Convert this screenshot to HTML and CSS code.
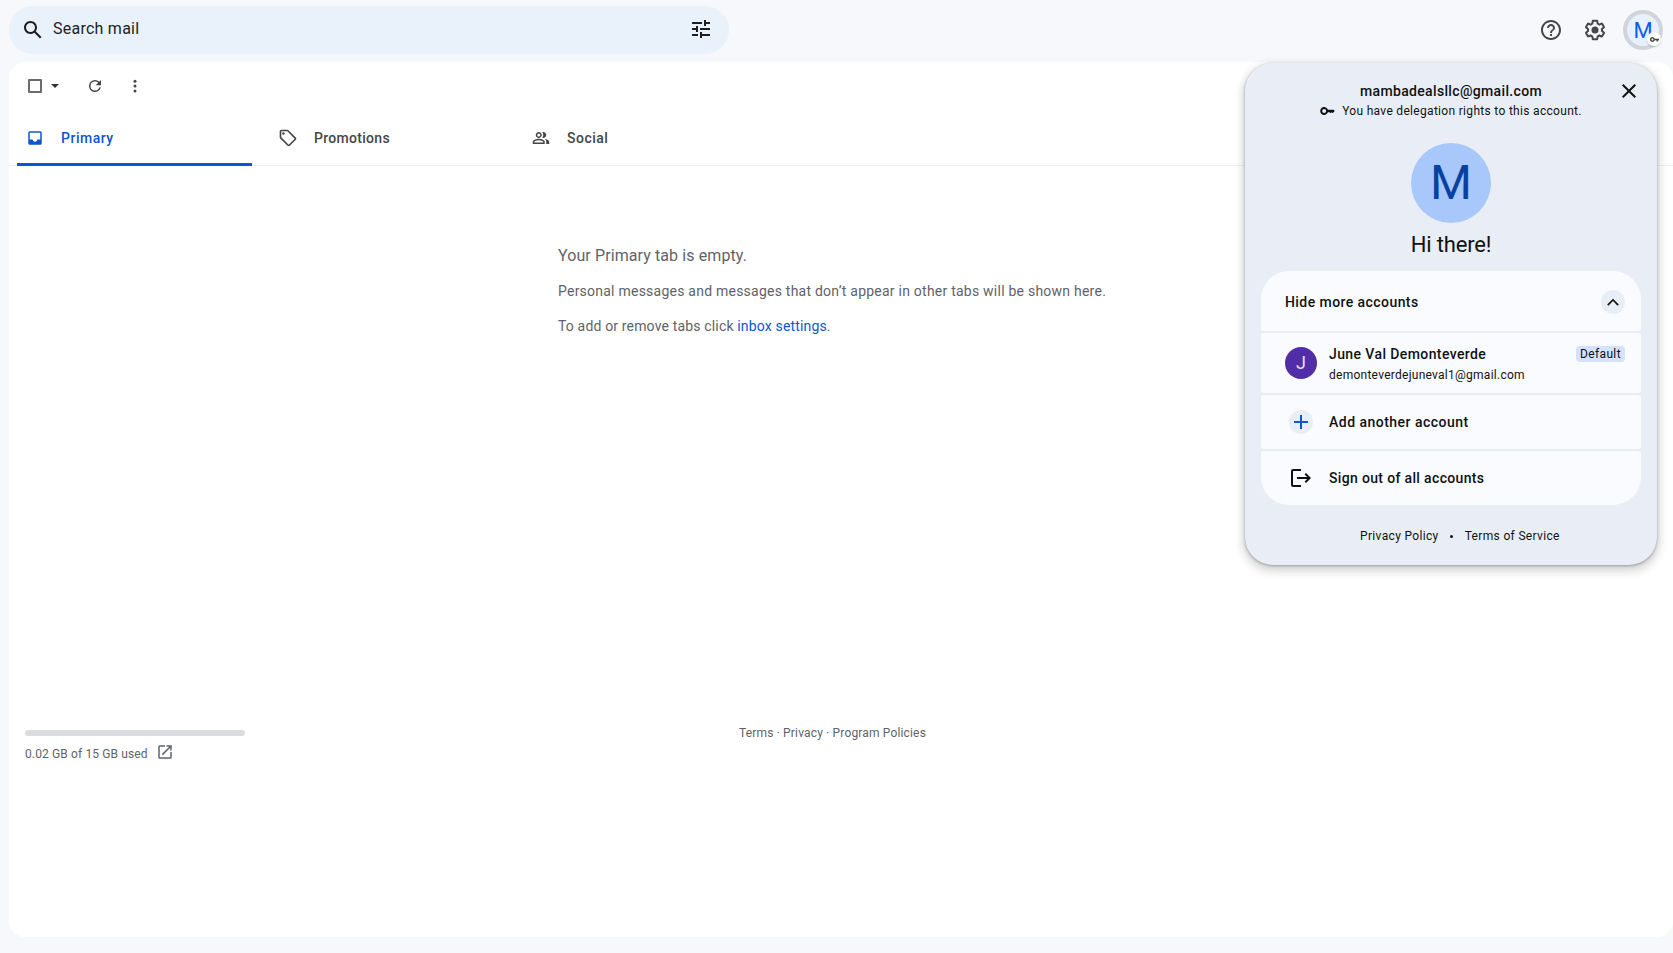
FILE: index.html
```html
<!DOCTYPE html>
<html lang="en">
<head>
  <meta charset="UTF-8">
  <meta name="viewport" content="width=device-width, initial-scale=1.0">
  <title>Inbox</title>
  <link rel="stylesheet" href="styles.css">
</head>
<body>
  <header class="topbar">
    <div class="search">
      <svg class="icon" width="24" height="24" viewBox="0 0 24 24"><path d="M20.49 19l-5.73-5.73C15.53 12.2 16 10.91 16 9.5 16 5.91 13.09 3 9.5 3S3 5.91 3 9.5 5.91 16 9.5 16c1.41 0 2.7-.47 3.77-1.24L19 20.49 20.49 19zM5 9.5C5 7.01 7.01 5 9.5 5S14 7.01 14 9.5 11.99 14 9.5 14 5 11.99 5 9.5z"/></svg>
      <span class="search-text">Search mail</span>
      <svg class="icon tune" width="24" height="24" viewBox="0 0 24 24"><path d="M3 17v2h6v-2H3zM3 5v2h10V5H3zm10 16v-2h8v-2h-8v-2h-2v6h2zM7 9v2H3v2h4v2h2V9H7zm14 4v-2H11v2h10zm-6-4h2V7h4V5h-4V3h-2v6z"/></svg>
    </div>
    <div class="top-actions">
      <svg class="icon-grey" width="24" height="24" viewBox="0 0 24 24"><path d="M11 18h2v-2h-2v2zm1-16C6.48 2 2 6.48 2 12s4.480 10 10 10 10-4.480 10-10S17.520 2 12 2zm0 18c-4.410 0-8-3.590-8-8s3.590-8 8-8 8 3.590 8 8-3.590 8-8 8zm0-14c-2.210 0-4 1.790-4 4h2c0-1.100.9-2 2-2s2 .9 2 2c0 2-3 1.750-3 5h2c0-2.250 3-2.500 3-5 0-2.210-1.790-4-4-4z"/></svg>
      <svg class="icon-grey" width="24" height="24" viewBox="0 0 24 24"><path d="M13.850 22.250h-3.700c-.74 0-1.360-.54-1.450-1.270l-.27-1.890c-.27-.14-.53-.29-.79-.46l-1.800.72c-.7.260-1.470-.030-1.810-.65L2.200 15.530c-.35-.66-.2-1.440.36-1.880l1.530-1.190c-.010-.15-.020-.3-.020-.46 0-.15.010-.31.020-.46l-1.520-1.190c-.59-.45-.74-1.260-.37-1.880l1.850-3.190c.34-.62 1.110-.9 1.790-.63l1.810.73c.26-.17.520-.32.780-.46l.27-1.910c.09-.7.710-1.250 1.440-1.250h3.700c.74 0 1.360.54 1.450 1.270l.27 1.890c.27.14.53.29.79.46l1.800-.72c.71-.26 1.480.03 1.820.65l1.840 3.180c.36.66.2 1.440-.36 1.880l-1.520 1.190c.01.15.02.3.02.46s-.01.31-.02.46l1.520 1.190c.56.45.72 1.230.37 1.860l-1.860 3.220c-.34.62-1.110.9-1.800.63l-1.800-.72c-.26.17-.52.32-.78.46l-.27 1.910c-.1.680-.72 1.220-1.460 1.220zm-3.230-2h2.760l.37-2.550.53-.22c.44-.18.880-.44 1.340-.78l.45-.34 2.380.96 1.380-2.400-2.030-1.580.07-.56c.030-.260.060-.510.060-.780s-.030-.530-.060-.780l-.07-.56 2.030-1.580-1.390-2.400-2.390.96-.45-.35c-.42-.32-.87-.58-1.330-.77l-.52-.22-.37-2.550h-2.760l-.37 2.550-.53.210c-.44.190-.88.440-1.340.790l-.45.330-2.380-.95-1.390 2.390 2.030 1.580-.07.560a7 7 0 0 0-.06.790c0 .260.020.530.060.780l.07.560-2.030 1.580 1.380 2.400 2.390-.96.450.35c.43.330.86.580 1.330.77l.53.220.38 2.550z"/><circle cx="12" cy="12" r="3.5"/></svg>
      <div class="account">
        <span class="account-letter">M</span>
        <span class="account-badge">
          <svg width="9" height="5" viewBox="0 0 22 12"><path d="M11.650 4A6 6 0 1 0 11.650 8H16v3h4V8h2V4zM6 8.500a2.500 2.500 0 1 1 0-5 2.500 2.500 0 0 1 0 5z"/></svg>
        </span>
      </div>
    </div>
  </header>

  <main class="mail">
    <div class="toolbar">
      <span class="checkbox"></span>
      <span class="caret"></span>
      <svg class="refresh" width="18" height="18" viewBox="0 0 24 24"><path d="M17.650 6.350A7.960 7.960 0 0 0 12 4a8 8 0 1 0 7.730 10h-2.080A6 6 0 1 1 12 6c1.660 0 3.140.69 4.220 1.780L13 11h7V4z"/></svg>
      <svg class="more" width="18" height="18" viewBox="0 0 24 24"><circle cx="12" cy="5.500" r="2"/><circle cx="12" cy="12" r="2"/><circle cx="12" cy="18.500" r="2"/></svg>
    </div>

    <nav class="tabs">
      <div class="tab active">
        <svg width="18" height="18" viewBox="0 0 24 24"><path d="M19 3H5a2 2 0 0 0-2 2v14a2 2 0 0 0 2 2h14a2 2 0 0 0 2-2V5a2 2 0 0 0-2-2zm0 11h-4c0 1.660-1.350 3-3 3s-3-1.340-3-3H5V5h14v9z"/></svg>
        <span>Primary</span>
      </div>
      <div class="tab promotions">
        <svg width="20" height="20" viewBox="0 0 24 24"><path d="M21.410 11.410l-8.830-8.830C12.210 2.210 11.700 2 11.170 2H4c-1.100 0-2 .9-2 2v7.170c0 .53.21 1.040.59 1.410l8.830 8.830c.78.780 2.050.780 2.830 0l7.170-7.170c.78-.78.78-2.040-.01-2.830zM12.830 20L4 11.170V4h7.170L20 12.830 12.830 20z"/><circle cx="6.500" cy="6.500" r="1.500"/></svg>
        <span>Promotions</span>
      </div>
      <div class="tab">
        <svg width="18" height="18" viewBox="0 0 24 24"><path d="M9 12c2.200 0 4-1.800 4-4s-1.800-4-4-4-4 1.800-4 4 1.800 4 4 4zm0-6a2 2 0 1 1 0 4 2 2 0 0 1 0-4zM9 13c-2.700 0-8 1.300-8 4v3h16v-3c0-2.700-5.300-4-8-4zm6 5H3v-1c.2-.7 3.300-2 6-2s5.800 1.300 6 2v1zM15 12c2.200 0 4-1.800 4-4s-1.800-4-4-4c-.5 0-.9.100-1.300.2.800 1 1.300 2.400 1.300 3.800s-.5 2.800-1.300 3.800c.4.1.8.2 1.300.2zM17 13.400c1.200.9 2 2.100 2 3.600v3h4v-3c0-2-3-3.200-6-3.600z"/></svg>
        <span>Social</span>
      </div>
    </nav>

    <section class="empty">
      <p class="empty-title">Your Primary tab is empty.</p>
      <p class="empty-text">Personal messages and messages that don’t appear in other tabs will be shown here.</p>
      <p class="empty-hint">To add or remove tabs click <a href="#">inbox settings</a>.</p>
    </section>

    <footer class="mail-footer">
      <div class="storage">
        <div class="storage-bar"></div>
        <div class="storage-info">
          <span class="storage-text">0.02 GB of 15 GB used</span>
          <svg width="18" height="18" viewBox="0 0 24 24"><path d="M19 19H5V5h7V3H5a2 2 0 0 0-2 2v14a2 2 0 0 0 2 2h14a2 2 0 0 0 2-2v-7h-2v7zM14 3v2h3.590l-9.830 9.830 1.410 1.410L19 6.410V10h2V3h-7z"/></svg>
        </div>
      </div>
      <div class="legal">Terms · Privacy · Program Policies</div>
    </footer>
  </main>

  <aside class="panel">
    <svg class="close" width="24" height="24" viewBox="0 0 24 24"><path d="M19 6.410L17.590 5 12 10.590 6.410 5 5 6.410 10.590 12 5 17.590 6.410 19 12 13.410 17.590 19 19 17.590 13.410 12z"/></svg>
    <div class="panel-email">mambadealsllc@gmail.com</div>
    <div class="delegation">
      <svg width="15" height="8" viewBox="0 0 22 12"><path d="M11.650 4A6 6 0 1 0 11.650 8H14l1.500 1.500L17 8l1.500 1.500L22 6l-2-2zM6 9a3 3 0 1 1 0-6 3 3 0 0 1 0 6z"/></svg>
      <span>You have delegation rights to this account.</span>
    </div>
    <div class="big-avatar">M</div>
    <div class="greeting">Hi there!</div>

    <div class="accounts">
      <div class="row row-toggle">
        <span class="row-label hide-label">Hide more accounts</span>
        <span class="round">
          <svg width="20" height="20" viewBox="0 0 24 24"><path d="M12 8l-7 7 1.500 1.500 5.500-5.600 5.500 5.600L19 15z"/></svg>
        </span>
      </div>
      <div class="row row-user">
        <span class="user-avatar">J</span>
        <div class="user-info">
          <div class="row-label user-name">June Val Demonteverde</div>
          <div class="user-mail">demonteverdejuneval1@gmail.com</div>
        </div>
        <span class="tag">Default</span>
      </div>
      <div class="row row-action">
        <span class="action-icon">
          <span class="round plus">
            <svg width="14" height="14" viewBox="0 0 14 14"><path d="M6 0h2v6h6v2H8v6H6V8H0V6h6z"/></svg>
          </span>
        </span>
        <span class="row-label add-label">Add another account</span>
      </div>
      <div class="row row-action">
        <span class="action-icon">
          <svg width="20" height="18" viewBox="0 0 20 18"><path d="M10 0H2a2 2 0 0 0-2 2v14a2 2 0 0 0 2 2h8v-2H2V2h8zM15 4l-1.400 1.400L16.200 8H6v2h10.200l-2.600 2.600L15 14l5-5z"/></svg>
        </span>
        <span class="row-label out-label">Sign out of all accounts</span>
      </div>
    </div>

    <div class="panel-links">
      <span>Privacy Policy</span>
      <span class="dot"></span>
      <span>Terms of Service</span>
    </div>
  </aside>
</body>
</html>
```
FILE: styles.css
```css
* {
  box-sizing: border-box;
}
body {
  margin: 0;
  height: 953px;
  overflow: hidden;
  background-color: #f6f8fc;
  color: #1f1f1f;
  font-family: Roboto, "Liberation Sans", sans-serif;
  font-size: 14px;
}
svg {
  display: block;
  flex: none;
  fill: currentColor;
}
p {
  margin: 0;
}

/* top bar */
.topbar {
  display: flex;
  justify-content: space-between;
  height: 62px;
  padding: 6px 10px 0 9px;
}
.search {
  display: flex;
  align-items: center;
  width: 720px;
  height: 48px;
  padding: 0 16px 0 12px;
  border-radius: 24px;
  background-color: #e9f1fb;
}
.search-text {
  flex: 1;
  margin-left: 8px;
  font-size: 16px;
  line-height: 24px;
  margin-top: -2px;
  letter-spacing: 0.25px;
}
.tune {
  margin-top: -2px;
}
.top-actions {
  display: flex;
  align-items: center;
  height: 48px;
  gap: 20px;
}
.icon-grey {
  color: #444746;
}
.account {
  position: relative;
  width: 40px;
  height: 40px;
  margin-left: -4px;
  border: 4px solid #d1d5db;
  border-radius: 50%;
  background-color: #e8f0fe;
  text-align: center;
}
.account-letter {
  font-size: 22px;
  line-height: 33px;
  color: #0b5fe8;
}
.account-badge {
  position: absolute;
  right: -2px;
  bottom: 0;
  display: flex;
  align-items: center;
  justify-content: center;
  width: 14px;
  height: 14px;
  border-radius: 50%;
  background-color: #fff;
  color: #444746;
  box-shadow: 0 1px 2px rgba(0, 0, 0, 0.2);
}

/* mail area */
.mail {
  display: flex;
  flex-direction: column;
  height: 875px;
  margin-left: 9px;
  border-radius: 16px;
  background-color: #fff;
}
.toolbar {
  display: flex;
  align-items: center;
  height: 48px;
  padding-left: 19px;
  color: #444746;
}
.checkbox {
  width: 14px;
  height: 14px;
  border: 2px solid #6b6d6c;
  border-radius: 1px;
}
.caret {
  margin-left: 9px;
  border: 4px solid transparent;
  border-top-color: #333;
  border-bottom: 0;
}
.refresh {
  margin-left: 27px;
}
.more {
  margin-left: 22px;
}
.tabs {
  display: flex;
  gap: 18px;
  height: 56px;
  padding-left: 8px;
  border-bottom: 1px solid #eceff1;
}
.tab {
  display: flex;
  align-items: center;
  width: 235px;
  height: 56px;
  padding-left: 9px;
  color: #444746;
  font-weight: 500;
  letter-spacing: 0.5px;
}
.tab svg {
  margin-right: 17px;
}
.tab.active {
  color: #0b57d0;
  border-bottom: 3px solid #0b57d0;
  border-radius: 2px 2px 0 0;
  padding-top: 3px;
}
.tab.promotions {
  padding-left: 8px;
  letter-spacing: 0.3px;
}
.tab.promotions svg {
  margin-right: 16px;
}
.empty {
  width: 560px;
  margin: 78px 0 0 549px;
  color: #5f6368;
}
.empty-title {
  font-size: 16px;
  line-height: 24px;
  letter-spacing: 0.1px;
}
.empty-text,
.empty-hint {
  line-height: 21px;
  white-space: nowrap;
}
.empty-text {
  margin-top: 13px;
  letter-spacing: 0.235px;
}
.empty-hint {
  margin-top: 14px;
  letter-spacing: 0.16px;
}
.empty a {
  color: #0b57d0;
  text-decoration: none;
}
.mail-footer {
  display: flex;
  margin-top: 393px;
  padding-left: 16px;
  color: #5f6368;
  font-size: 12px;
}
.storage {
  width: 714px;
}
.storage-bar {
  width: 220px;
  height: 6px;
  border-radius: 3px;
  background-color: #dadce0;
}
.storage-info {
  display: flex;
  align-items: center;
  gap: 8px;
  margin-top: 7px;
}
.storage-text {
  padding-top: 3px;
  letter-spacing: 0.13px;
}
.legal {
  margin-top: -4px;
  line-height: 14px;
  letter-spacing: 0.16px;
}

/* account popup, floats over the mail area */
.panel {
  position: absolute;
  top: 63px;
  right: 16px;
  width: 412px;
  height: 502px;
  padding: 18px 16px 0;
  border-radius: 28px;
  background-color: #e9eef6;
  color: #111;
  box-shadow: 0 4px 8px 3px rgba(0, 0, 0, 0.15), 0 1px 3px rgba(0, 0, 0, 0.3);
}
.close {
  position: absolute;
  top: 16px;
  right: 16px;
}
.panel-email {
  text-align: center;
  font-weight: 500;
  line-height: 20px;
  letter-spacing: 0.34px;
}
.delegation {
  display: flex;
  align-items: center;
  justify-content: center;
  gap: 7px;
  height: 20px;
  font-size: 12px;
  letter-spacing: 0.31px;
}
.big-avatar {
  width: 80px;
  height: 80px;
  margin: 22px auto 0;
  border-radius: 50%;
  background-color: #a8c7fa;
  color: #0842a0;
  font-size: 48px;
  line-height: 80px;
  text-align: center;
}
.greeting {
  margin-top: 8px;
  font-size: 22px;
  line-height: 28px;
  letter-spacing: -0.15px;
  text-align: center;
}
.accounts {
  display: flex;
  flex-direction: column;
  gap: 2px;
  margin-top: 12px;
  border-radius: 28px;
  overflow: hidden;
}
.row {
  display: flex;
  align-items: center;
  height: 60px;
  padding: 0 16px 0 24px;
  border-radius: 3px;
  background-color: #f9fbff;
}
.row-label {
  font-weight: 500;
}
.row-toggle {
  justify-content: space-between;
  padding-top: 2px;
}
.round {
  display: flex;
  align-items: center;
  justify-content: center;
  width: 24px;
  height: 24px;
  border-radius: 50%;
  background-color: #e9eef6;
}
.plus {
  color: #0b57d0;
}
.hide-label {
  letter-spacing: 0.43px;
}
.add-label {
  letter-spacing: 0.48px;
}
.out-label {
  letter-spacing: 0.34px;
}
.row-user {
  align-items: flex-start;
  padding-top: 11px;
}
.user-avatar {
  width: 32px;
  height: 32px;
  margin-top: 3px;
  border-radius: 50%;
  background-color: #512da8;
  color: #e8def8;
  font-size: 18px;
  line-height: 32px;
  text-align: center;
}
.user-info {
  flex: 1;
  margin-left: 12px;
}
.user-name {
  line-height: 20px;
  letter-spacing: 0.4px;
}
.user-mail {
  font-size: 12px;
  line-height: 20px;
  margin-top: 1px;
  letter-spacing: 0.26px;
}
.tag {
  width: 49px;
  height: 16px;
  margin-top: 2px;
  border-radius: 4px;
  background-color: #d3e3fd;
  font-size: 12px;
  line-height: 16px;
  letter-spacing: 0.35px;
  text-align: center;
}
.row-action {
  height: 54px;
}
.action-icon {
  display: flex;
  justify-content: center;
  width: 32px;
  margin-right: 12px;
}
.panel-links {
  display: flex;
  align-items: center;
  margin: 23px 0 0 99px;
  font-size: 12px;
  line-height: 16px;
  letter-spacing: 0.34px;
}
.dot {
  width: 3px;
  height: 3px;
  margin: 0 12px 0 11px;
  border-radius: 50%;
  background-color: #111;
}
```
